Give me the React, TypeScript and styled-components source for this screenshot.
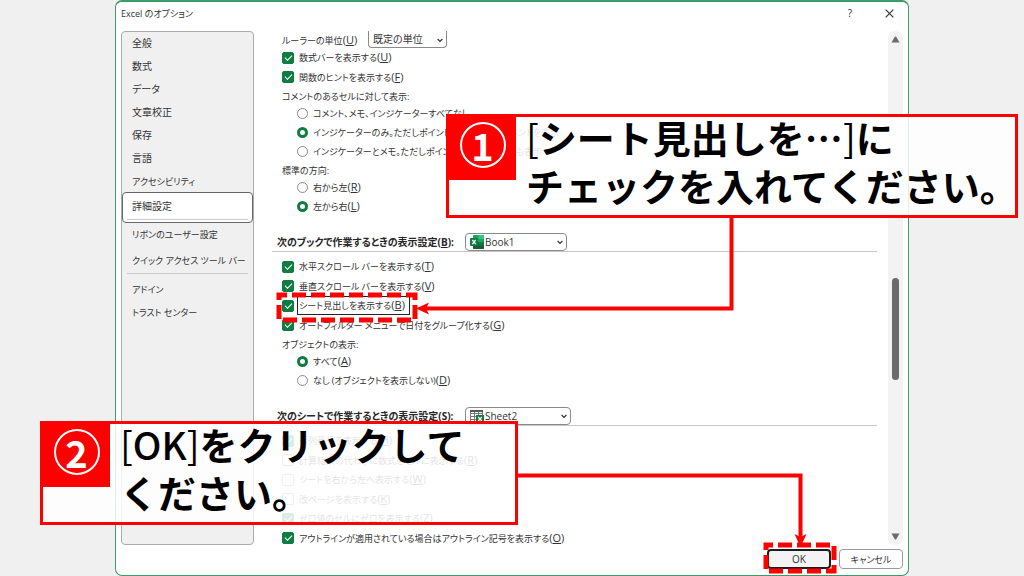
import React from 'react';
import styled, { createGlobalStyle, css } from 'styled-components';

const GlobalStyle = createGlobalStyle`
  * { box-sizing: border-box; }
  body {
    margin: 0;
    background: #f0f0f0;
    color: #333;
    font-family: "Open Sans", "Noto Sans CJK JP", sans-serif;
    font-size: 10px;
    font-feature-settings: "palt";
  }
  button, select, input {
    margin: 0;
    color: inherit;
    font: inherit;
    font-feature-settings: inherit;
  }
`;

const Stage = styled.main`
  position: relative;
  display: flex;
  min-height: 100vh;
  padding: 0 115px;
`;

const Dialog = styled.section`
  flex: 1;
  min-width: 0;
  display: flex;
  flex-direction: column;
  border: 1px solid #3f9a69;
  border-top-width: 2px;
  border-radius: 7px;
  background: #fff;
`;

const TitleBar = styled.header`
  display: flex;
  align-items: center;
  height: 29px;
  padding: 0 7px 7px 5px;
`;

const Title = styled.h1`
  flex: 1;
  margin: 0;
  font-size: 9px;
  font-weight: 400;
`;

const TitleButton = styled.button`
  display: grid;
  place-items: center;
  width: 24px;
  height: 20px;
  margin-left: 15px;
  padding: 0;
  border: 0;
  background: none;
`;

const Body = styled.div`
  flex: 1;
  display: flex;
  min-height: 0;
  padding: 0 5px;
`;

const Sidebar = styled.nav`
  display: flex;
  flex-direction: column;
  width: 133px;
  border: 1px solid #ababab;
  border-radius: 4px;
  background: #f0f0f0;
`;

const NavItem = styled.a<{ $active?: boolean; $compact?: boolean }>`
  display: block;
  height: 23px;
  padding: 0 10px;
  color: inherit;
  font-size: ${(p) => (p.$compact ? 9 : 10)}px;
  line-height: 23px;
  text-decoration: none;
  white-space: nowrap;
  ${(p) =>
    p.$active &&
    css`
      height: 31px;
      margin: -1px 0 0;
      padding: 0 4px;
      border: 1px solid #666;
      border-radius: 4px;
      background: #fff;
      line-height: 26px;
      span {
        display: block;
        padding: 0 5px;
        border-bottom: 1px solid #c8c8c8;
      }
    `}
`;

const NavGroup = styled.div<{ $divided?: boolean }>`
  display: flex;
  flex-direction: column;
  ${(p) =>
    p.$divided &&
    css`
      gap: 3px;
      margin-bottom: 4px;
      &::after {
        content: "";
        margin: -2px 5px 0;
        border-bottom: 1px solid #c8c8c8;
      }
    `}
`;

const Pane = styled.form`
  flex: 1;
  min-width: 0;
  margin-bottom: -3px;
  padding: 0 11px 0 18px;
`;

const AccessKey = styled.span``;

const Group = styled.div`
  padding-left: 10px;
  font-size: 9px;
  ${AccessKey} { font-size: 11px; }
`;

const SelectRow = styled.div`
  display: flex;
  align-items: center;
  height: 17px;
`;

const SelectBox = styled.span<{ $width: number; $clipped?: boolean }>`
  position: relative;
  display: flex;
  width: ${(p) => p.$width}px;
  height: ${(p) => (p.$clipped ? 17 : 18)}px;
  font-size: 10px;
  > svg { position: absolute; pointer-events: none; }
  select {
    appearance: none;
    width: 100%;
    height: 100%;
    padding: 0 16px 0 4px;
    border: 1px solid #8a8a8a;
    border-radius: 4px;
    background: #fff;
    ${(p) => p.$clipped && 'border-top: 0; border-radius: 0 0 4px 4px;'}
  }
`;

const Chevron = styled.svg`
  top: 7px;
  right: 4px;
  width: 6px;
  height: 5px;
`;

const FileIcon = styled.svg`
  top: 2px;
  left: 5px;
  width: 14px;
  height: 14px;
  & + select { padding-left: 19px; }
`;

const SectionHead = styled.div`
  display: flex;
  align-items: center;
  height: 21px;
  margin: 15px 0 5px;
  padding: 1px 0 0 5px;
  border-bottom: 1px solid #c8c8c8;
`;

const HeadLabel = styled.label`
  width: 188px;
  color: #262626;
  font-weight: 700;
  white-space: nowrap;
`;

const RulerLabel = styled.label`
  width: 86px;
  white-space: nowrap;
`;

const GroupLabel = styled.div`
  height: 17px;
  padding-top: 2px;
  line-height: 15px;
`;

const OptionRow = styled.label<{ $indent?: boolean }>`
  display: flex;
  align-items: center;
  gap: 5px;
  height: 19px;
  padding-left: ${(p) => (p.$indent ? 15 : 0)}px;
  white-space: nowrap;
  &:nth-child(even) { height: ${(p) => (p.$indent ? 19 : 20)}px; }
`;

const OptionText = styled.span<{ $focused?: boolean }>`
  line-height: 14px;
  ${(p) => p.$focused && 'padding-right: 3px; outline: 1px solid #222; outline-offset: 1px;'}
`;

const CheckBox = styled.input`
  appearance: none;
  flex: none;
  width: 12px;
  height: 12px;
  border: 1px solid #8a8a8a;
  border-radius: 2px;
  background: #fff;
  &:checked {
    border-color: #107c41;
    background: #107c41;
  }
  &:checked::after {
    content: "";
    display: block;
    width: 6px;
    height: 3px;
    margin: 2px 0 0 2px;
    border: solid #fff;
    border-width: 0 0 1px 1px;
    transform: rotate(-45deg);
  }
`;

const Radio = styled.input`
  appearance: none;
  flex: none;
  width: 11px;
  height: 11px;
  border: 1px solid #8a8a8a;
  border-radius: 50%;
  background: #fff;
  &:checked { border: 3px solid #107c41; }
`;

const ScrollBar = styled.div`
  display: flex;
  flex-direction: column;
  align-items: center;
  width: 15px;
  padding: 5px 0;
  border-radius: 7px;
  background: #f3f3f3;
`;

const ScrollTrack = styled.div`
  flex: 1;
  display: grid;
  grid-template-rows: 234fr 101fr 152fr;
`;

const ScrollThumb = styled.div`
  grid-row: 2;
  width: 7px;
  border-radius: 4px;
  background: #6b6b6b;
`;

const Footer = styled.footer`
  display: flex;
  justify-content: flex-end;
  gap: 8px;
  padding: 4px 5px 6px;
`;

const DialogButton = styled.button<{ $primary?: boolean }>`
  width: 64px;
  height: 20px;
  padding: 0;
  border: ${(p) => (p.$primary ? '2px solid #1c1c1c' : '1px solid #9a9a9a')};
  border-radius: 4px;
  background: ${(p) => (p.$primary ? '#f3f3f3' : '#fff')};
  font-size: ${(p) => (p.$primary ? 10 : 9)}px;
`;

const Marks = styled.svg`
  position: absolute;
  top: 0;
  left: 0;
  width: 1024px;
  height: 576px;
  pointer-events: none;
`;

const Callout = styled.aside<{ $left: number; $top: number; $width: number }>`
  position: absolute;
  left: ${(p) => p.$left}px;
  top: ${(p) => p.$top}px;
  display: flex;
  align-items: flex-start;
  gap: 10px;
  width: ${(p) => p.$width}px;
  height: 104px;
  border: 3px solid #f00;
  background: rgba(255, 255, 255, 0.86);
  font-family: "Noto Sans CJK JP", sans-serif;
  font-feature-settings: normal;
  font-size: 38px;
`;

const StepBadge = styled.div`
  flex: none;
  display: grid;
  place-items: center;
  width: 67px;
  height: 63px;
  padding: 0 0 7px;
  background: #f00;
`;

const StepNumber = styled.span`
  display: grid;
  place-items: center;
  width: 46px;
  height: 46px;
  border: 2px solid #fff;
  border-radius: 50%;
  color: #fff;
  font-weight: 700;
  line-height: 38px;
`;

const CalloutText = styled.p`
  margin: -4px 0 0;
  color: #000;
  font-weight: 700;
  line-height: 48px;
  white-space: nowrap;
`;

const Bracket = styled.span`
  font-weight: 400;
`;

const Latin = styled.span`
  font-weight: 500;
`;

type OptionProps = {
  text: string;
  accessKey?: string;
  checked?: boolean;
  focused?: boolean;
};

const Keyed = ({ text, accessKey }: { text: string; accessKey?: string }) => (
  <>
    {text}
    {accessKey && <AccessKey>(<u>{accessKey}</u>)</AccessKey>}
  </>
);

const Check = ({ text, accessKey, checked, focused }: OptionProps) => (
  <OptionRow>
    <CheckBox type="checkbox" defaultChecked={checked} />
    <OptionText $focused={focused}><Keyed text={text} accessKey={accessKey} /></OptionText>
  </OptionRow>
);

const Choice = ({ text, accessKey, checked, name }: OptionProps & { name: string }) => (
  <OptionRow $indent>
    <Radio type="radio" name={name} defaultChecked={checked} />
    <OptionText><Keyed text={text} accessKey={accessKey} /></OptionText>
  </OptionRow>
);

const ChevronDown = () => (
  <Chevron viewBox="0 0 6 5" fill="none" stroke="#333" strokeWidth="1.2">
    <path d="M.6 1 3 3.4 5.4 1" />
  </Chevron>
);

const Arrow = ({ down }: { down?: boolean }) => (
  <svg width="9" height="7" viewBox="0 0 9 7" fill="#6b6b6b">
    <path d={down ? 'M.5.5h8L5.2 6.2a.8.8 0 0 1-1.4 0z' : 'M.5 6.5h8L5.2.8a.8.8 0 0 0-1.4 0z'} />
  </svg>
);

const topNav = ['全般', '数式', 'データ', '文章校正', '保存', '言語'];

export default function App() {
  return (
    <Stage>
      <GlobalStyle />
      <Dialog>
        <TitleBar>
          <Title>Excel のオプション</Title>
          <TitleButton type="button" aria-label="ヘルプ">?</TitleButton>
          <TitleButton type="button" aria-label="閉じる">
            <svg width="9" height="9" viewBox="0 0 9 9" stroke="#333" strokeWidth="1.2">
              <path d="M.7.7l7.6 7.6M8.3.7.7 8.3" />
            </svg>
          </TitleButton>
        </TitleBar>
        <Body>
          <Sidebar>
            <NavGroup>
              {topNav.map((item) => <NavItem key={item} href="#">{item}</NavItem>)}
              <NavItem href="#" $compact>アクセシビリティ</NavItem>
              <NavItem href="#" $active><span>詳細設定</span></NavItem>
            </NavGroup>
            <NavGroup $divided>
              <NavItem href="#" $compact>リボンのユーザー設定</NavItem>
              <NavItem href="#" $compact>クイック アクセス ツール バー</NavItem>
            </NavGroup>
            <NavGroup>
              <NavItem href="#" $compact>アドイン</NavItem>
              <NavItem href="#" $compact>トラスト センター</NavItem>
            </NavGroup>
          </Sidebar>
          <Pane>
            <Group>
              <SelectRow>
                <RulerLabel htmlFor="ruler"><Keyed text="ルーラーの単位" accessKey="U" /></RulerLabel>
                <SelectBox $width={79} $clipped>
                  <ChevronDown />
                  <select id="ruler"><option>既定の単位</option></select>
                </SelectBox>
              </SelectRow>
              <div>
                <Check text="数式バーを表示する" accessKey="U" checked />
                <Check text="関数のヒントを表示する" accessKey="F" checked />
              </div>
              <GroupLabel>コメントのあるセルに対して表示:</GroupLabel>
              <div>
                <Choice name="comment" text="コメント、メモ、インジケーターすべてなし" />
                <Choice name="comment" text="インジケーターのみ。ただしポイント時にはメモとコメントを表示" checked />
                <Choice name="comment" text="インジケーターとメモ。ただしポイント時にはコメントも表示" />
              </div>
              <GroupLabel>標準の方向:</GroupLabel>
              <div>
                <Choice name="direction" text="右から左" accessKey="R" />
                <Choice name="direction" text="左から右" accessKey="L" checked />
              </div>
            </Group>
            <SectionHead>
              <HeadLabel htmlFor="book"><Keyed text="次のブックで作業するときの表示設定" accessKey="B" />:</HeadLabel>
              <SelectBox $width={102}>
                <ChevronDown />
                <FileIcon viewBox="0 0 14 14">
                  <rect x="3" y="0" width="11" height="14" rx="1" fill="#21a366" />
                  <path d="M8.500 0H13a1 1 0 0 1 1 1v3H8.500z" fill="#33c481" />
                  <path d="M3 7h11v6a1 1 0 0 1-1 1H4a1 1 0 0 1-1-1z" fill="#185c37" />
                  <path d="M8.500 7H14v3.500H8.500z" fill="#107c41" />
                  <rect x="0" y="3" width="8" height="8" rx="1" fill="#107c41" />
                  <path d="M2.300 4.800l3.400 4.400M5.700 4.800 2.300 9.200" stroke="#fff" strokeWidth="1.300" />
                </FileIcon>
                <select id="book"><option>Book1</option></select>
              </SelectBox>
            </SectionHead>
            <Group>
              <div>
                <Check text="水平スクロール バーを表示する" accessKey="T" checked />
                <Check text="垂直スクロール バーを表示する" accessKey="V" checked />
                <Check text="シート見出しを表示する" accessKey="B" checked focused />
                <Check text="オートフィルター メニューで日付をグループ化する" accessKey="G" checked />
              </div>
              <GroupLabel>オブジェクトの表示:</GroupLabel>
              <div>
                <Choice name="object" text="すべて" accessKey="A" checked />
                <Choice name="object" text="なし (オブジェクトを表示しない)" accessKey="D" />
              </div>
            </Group>
            <SectionHead>
              <HeadLabel htmlFor="sheet"><Keyed text="次のシートで作業するときの表示設定" accessKey="S" />:</HeadLabel>
              <SelectBox $width={106}>
                <ChevronDown />
                <FileIcon viewBox="0 0 14 14">
                  <path d="M.5 1.500h12v11H.5zM.5 4.500h12M.5 7.500h12M.5 10.500h12M4.500 1.500v11M8.500 1.500v11" fill="#fff" stroke="#777" />
                  <path d="M0 1h13v2H0z" fill="#555" />
                  <rect x="6" y="6" width="8" height="8" fill="#107c41" />
                  <path d="M8.200 8l3.600 4M11.800 8l-3.600 4" stroke="#fff" strokeWidth="1.200" />
                </FileIcon>
                <select id="sheet"><option>Sheet2</option></select>
              </SelectBox>
            </SectionHead>
            <Group>
              <Check text="行列番号を表示する" accessKey="H" checked />
              <Check text="計算結果の代わりに数式をセルに表示する" accessKey="R" />
              <Check text="シートを右から左へ表示する" accessKey="W" />
              <Check text="改ページを表示する" accessKey="K" />
              <Check text="ゼロ値のセルにゼロを表示する" accessKey="Z" checked />
              <Check text="アウトラインが適用されている場合はアウトライン記号を表示する" accessKey="O" checked />
            </Group>
          </Pane>
          <ScrollBar>
            <Arrow />
            <ScrollTrack><ScrollThumb /></ScrollTrack>
            <Arrow down />
          </ScrollBar>
        </Body>
        <Footer>
          <DialogButton type="button" $primary>OK</DialogButton>
          <DialogButton type="button">キャンセル</DialogButton>
        </Footer>
      </Dialog>

      <Callout $left={446} $top={114} $width={572}>
        <StepBadge><StepNumber>1</StepNumber></StepBadge>
        <CalloutText>
          <Bracket>[</Bracket>シート見出しを…<Bracket>]</Bracket>に<br />
          チェックを入れてください。
        </CalloutText>
      </Callout>
      <Callout $left={40} $top={421} $width={478}>
        <StepBadge><StepNumber>2</StepNumber></StepBadge>
        <CalloutText>
          <Bracket>[</Bracket><Latin>OK</Latin><Bracket>]</Bracket>をクリックして<br />
          ください。
        </CalloutText>
      </Callout>
      <Marks viewBox="0 0 1024 576" fill="none" stroke="#f00" strokeWidth="4">
        <rect x="279" y="295" width="136" height="25" strokeWidth="5" strokeDasharray="14 5" strokeDashoffset="6" />
        <rect x="766" y="545" width="68" height="26" strokeWidth="5" strokeDasharray="14 5" strokeDashoffset="7" />
        <path d="M731.500 217v91.500H424" />
        <path d="M517 475.500h283.500V538" />
        <path d="M416 308.500l13-6-3 6 3 6z" fill="#f00" stroke="none" />
        <path d="M800.500 547l-6-13 6 3 6-3z" fill="#f00" stroke="none" />
      </Marks>
    </Stage>
  );
}
